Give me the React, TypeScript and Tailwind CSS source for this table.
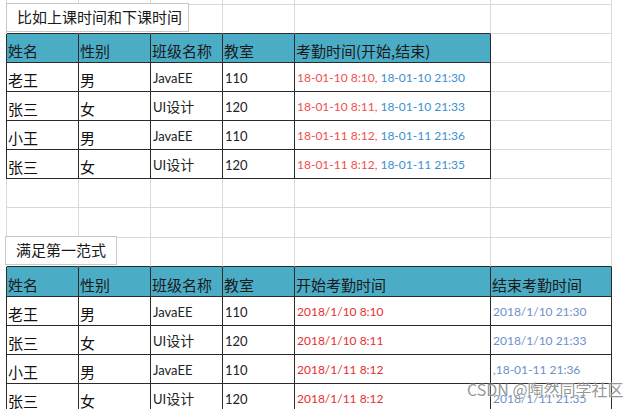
import React from 'react'

type Cell = {
  text?: React.ReactNode
  kind?: 'head' | 'cn' | 'small' | 'date' | 'red' | 'blue'
}

const widths = [72, 72, 72, 72, 196, 121]

// row heights of the sheet (first one is the cut-off row at the top)
const heights = [5, 29, 29, 29, 29, 29, 29, 29, 30, 29, 30, 29, 29, 29, 29]

const latin = "font-['Lato','Liberation_Sans',sans-serif]"
const cjk = "font-['Noto_Sans_CJK_SC','Noto_Sans',sans-serif]"

const ui = (
  <span>
    <span className={`${latin} text-[13px]`}>UI</span>
    <span className={`${cjk} text-[14px]`}>设计</span>
  </span>
)

const red1 = 'text-[#f24e4e]'
const blue1 = 'text-[#3d8fd1]'

const dates1 = [
  ['18-01-10 8:10,', '18-01-10 21:30'],
  ['18-01-10 8:11,', '18-01-10 21:33'],
  ['18-01-11 8:12,', '18-01-11 21:36'],
  ['18-01-11 8:12,', '18-01-11 21:35'],
]

const people = [
  ['老王', '男', 'JavaEE', '110'],
  ['张三', '女', 'UI', '120'],
  ['小王', '男', 'JavaEE', '110'],
  ['张三', '女', 'UI', '120'],
]

const dates2 = [
  ['2018/1/10 8:10', '2018/1/10 21:30'],
  ['2018/1/10 8:11', '2018/1/10 21:33'],
  ['2018/1/11 8:12', ',18-01-11 21:36'],
  ['2018/1/11 8:12', '2018/1/11 21:35'],
]

function personCells(p: string[]): Cell[] {
  return [
    { text: p[0], kind: 'cn' },
    { text: p[1], kind: 'cn' },
    { text: p[2] === 'UI' ? ui : p[2], kind: 'small' },
    { text: p[3], kind: 'small' },
  ]
}

// null = plain sheet row, otherwise the table cells from the first column on
const rows: (Cell[] | null)[] = [
  null,
  null,
  [
    { text: '姓名', kind: 'head' },
    { text: '性别', kind: 'head' },
    { text: '班级名称', kind: 'head' },
    { text: '教室', kind: 'head' },
    { text: '考勤时间(开始,结束)', kind: 'head' },
  ],
  ...people.map((p, i) => [
    ...personCells(p),
    {
      text: (
        <span>
          <span className={red1}>{dates1[i][0]}</span>{' '}
          <span className={blue1}>{dates1[i][1]}</span>
        </span>
      ),
      kind: 'date' as const,
    },
  ]),
  null,
  null,
  null,
  [
    { text: '姓名', kind: 'head' },
    { text: '性别', kind: 'head' },
    { text: '班级名称', kind: 'head' },
    { text: '教室', kind: 'head' },
    { text: '开始考勤时间', kind: 'head' },
    { text: '结束考勤时间', kind: 'head' },
  ],
  ...people.map((p, i) => [
    ...personCells(p),
    { text: dates2[i][0], kind: 'red' as const },
    { text: dates2[i][1], kind: 'blue' as const },
  ]),
]

const inTable = (r: number, c: number) => {
  const row = rows[r]
  return !!row && c >= 0 && c < row.length
}

const kindClass: Record<string, string> = {
  head: `${cjk} text-[15px] text-[#1a1a1a] pb-[2px] pl-[1px]`,
  cn: `${cjk} text-[15px] text-[#111] pb-[2px] pl-[1px]`,
  small: `${latin} text-[13px] text-[#222] pb-[4px] pl-[2px]`,
  date: `${latin} text-[12px] pb-[4px] pl-[2px]`,
  red: `${latin} text-[12px] text-[#e62e2e] pb-[4px] pl-[2px]`,
  blue: `${latin} text-[12px] text-[#6c91c9] pb-[4px] pl-[2px]`,
}

function SheetRow({ r }: { r: number }) {
  const row = rows[r]
  const leftDark = inTable(r, 0)
  return (
    <div
      className={`flex border-l ${leftDark ? 'border-l-[#2b2b2b]' : 'border-l-[#d9d9d9]'}`}
      style={{ height: heights[r] }}
    >
      {widths.map((w, c) => {
        const cell = row && c < row.length ? row[c] : undefined
        const me = inTable(r, c)
        const bottomDark = me || inTable(r + 1, c)
        const rightDark = me || inTable(r, c + 1)
        return (
          <div
            key={c}
            className={`flex items-end whitespace-nowrap border-r border-b leading-[18px] ${
              bottomDark ? 'border-b-[#2b2b2b]' : 'border-b-[#d9d9d9]'
            } ${rightDark ? 'border-r-[#2b2b2b]' : 'border-r-[#d9d9d9]'} ${
              cell?.kind === 'head' ? 'bg-[#4bacc6]' : 'bg-white'
            } ${cell?.kind ? kindClass[cell.kind] : ''}`}
            style={{ width: w }}
          >
            {cell?.text}
          </div>
        )
      })}
    </div>
  )
}

export default function App() {
  return (
    <div className="relative h-[409px] w-[642px] overflow-hidden bg-white">
      <div className="pl-[6px]">
        {rows.map((_, r) => (
          <SheetRow key={r} r={r} />
        ))}
      </div>

      {/* text boxes floating over the sheet */}
      <div
        className={`absolute left-[6px] top-[3px] flex h-[29px] w-[183px] items-center border border-[#c8c8c8] bg-white pl-[10px] text-[15px] text-[#1a1a1a] ${cjk}`}
      >
        比如上课时间和下课时间
      </div>
      <div
        className={`absolute left-[5px] top-[236px] flex h-[29px] w-[112px] items-center border border-[#c8c8c8] bg-white pl-[10px] text-[15px] text-[#1a1a1a] ${cjk}`}
      >
        满足第一范式
      </div>

      {/* watermark */}
      <div
        className={`absolute left-[467px] top-[379px] whitespace-nowrap text-[16px] leading-[20px] text-[#7a7a7a]/80 [text-shadow:0_0_2px_#ffffff] ${cjk}`}
      >
        CSDN @陶然同学社区
      </div>
    </div>
  )
}
